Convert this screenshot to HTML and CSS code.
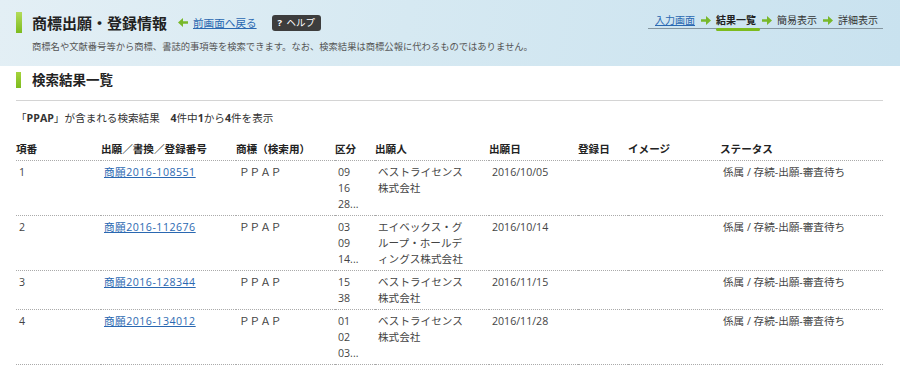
FILE: index.html
```html
<!DOCTYPE html>
<html lang="ja">
<head>
<meta charset="utf-8">
<title>商標出願・登録情報</title>
<link rel="stylesheet" href="styles.css">
</head>
<body>
  <header class="page-head">
    <div class="head-top">
      <div class="head-left">
        <h1 class="title">商標出願・登録情報</h1>
        <a class="back" href="#">
          <svg class="arrow" viewBox="0 0 10 9" width="10" height="9"><path d="M10 3.2H5V0L0 4.5 5 9V5.8h5z"/></svg>
          <span>前画面へ戻る</span>
        </a>
        <span class="help"><b>?</b> ヘルプ</span>
      </div>
      <ol class="steps">
        <li><a href="#">入力画面</a></li>
        <li class="sep"><svg class="arrow" viewBox="0 0 10 9" width="10" height="9"><path d="M0 3.2h5V0l5 4.5L5 9V5.8H0z"/></svg></li>
        <li class="active">結果一覧</li>
        <li class="sep"><svg class="arrow" viewBox="0 0 10 9" width="10" height="9"><path d="M0 3.2h5V0l5 4.5L5 9V5.8H0z"/></svg></li>
        <li>簡易表示</li>
        <li class="sep"><svg class="arrow" viewBox="0 0 10 9" width="10" height="9"><path d="M0 3.2h5V0l5 4.5L5 9V5.8H0z"/></svg></li>
        <li>詳細表示</li>
      </ol>
    </div>
    <p class="lead">商標名や文献番号等から商標、書誌的事項等を検索できます。なお、検索結果は商標公報に代わるものではありません。</p>
  </header>

  <main class="content">
    <h2 class="section-title">検索結果一覧</h2>
    <p class="count">「<b>PPAP</b>」が含まれる検索結果　<b>4</b>件中<b>1</b>から<b>4</b>件を表示</p>

    <table class="results">
      <colgroup>
        <col class="c-no">
        <col class="c-num">
        <col class="c-mark">
        <col class="c-class">
        <col class="c-applicant">
        <col class="c-date">
        <col class="c-reg">
        <col class="c-image">
        <col class="c-status">
      </colgroup>
      <thead>
        <tr>
          <th>項番</th>
          <th>出願／書換／登録番号</th>
          <th>商標（検索用）</th>
          <th>区分</th>
          <th>出願人</th>
          <th>出願日</th>
          <th>登録日</th>
          <th>イメージ</th>
          <th>ステータス</th>
        </tr>
      </thead>
      <tbody>
        <tr>
          <td>1</td>
          <td><a class="app-no" href="#">商願2016-108551</a></td>
          <td>ＰＰＡＰ</td>
          <td>09<br>16<br>28...</td>
          <td class="applicant">ベストライセンス株式会社</td>
          <td>2016/10/05</td>
          <td></td>
          <td></td>
          <td>係属 / 存続-出願-審査待ち</td>
        </tr>
        <tr>
          <td>2</td>
          <td><a class="app-no" href="#">商願2016-112676</a></td>
          <td>ＰＰＡＰ</td>
          <td>03<br>09<br>14...</td>
          <td class="applicant">エイベックス・グループ・ホールディングス株式会社</td>
          <td>2016/10/14</td>
          <td></td>
          <td></td>
          <td>係属 / 存続-出願-審査待ち</td>
        </tr>
        <tr>
          <td>3</td>
          <td><a class="app-no" href="#">商願2016-128344</a></td>
          <td>ＰＰＡＰ</td>
          <td>15<br>38</td>
          <td class="applicant">ベストライセンス株式会社</td>
          <td>2016/11/15</td>
          <td></td>
          <td></td>
          <td>係属 / 存続-出願-審査待ち</td>
        </tr>
        <tr>
          <td>4</td>
          <td><a class="app-no" href="#">商願2016-134012</a></td>
          <td>ＰＰＡＰ</td>
          <td>01<br>02<br>03...</td>
          <td class="applicant">ベストライセンス株式会社</td>
          <td>2016/11/28</td>
          <td></td>
          <td></td>
          <td>係属 / 存続-出願-審査待ち</td>
        </tr>
      </tbody>
    </table>
  </main>
</body>
</html>
```

FILE: styles.css
```css
html, body {
  margin: 0;
}

body {
  background-color: #fff;
  color: #444;
  font-family: "Open Sans", "Noto Sans CJK JP", sans-serif;
  font-size: 10.6px;
  line-height: 16px;
}

a {
  color: #2a68b1;
}

.page-head {
  height: 66px;
  box-sizing: border-box;
  padding: 12px 17px 0 16px;
  background: linear-gradient(100deg, #e3eff5 0%, #d6e9f2 45%, #c9e2ef 100%);
}

.head-top {
  display: flex;
  justify-content: space-between;
  align-items: flex-start;
}

.head-left {
  display: flex;
  align-items: center;
  height: 21px;
}

.title {
  display: flex;
  align-items: center;
  gap: 10px;
  margin: 0;
  font-size: 15px;
  font-weight: bold;
  color: #222;
}
.title::before {
  content: "";
  width: 6px;
  height: 21px;
  background: linear-gradient(#b4dc5a, #7cbb1e);
}

.arrow {
  fill: #78b82a;
  display: block;
}

.back {
  display: flex;
  align-items: center;
  gap: 5px;
  margin-left: 11px;
}

.help {
  margin-left: 15px;
  padding: 0 6px;
  height: 16px;
  line-height: 16px;
  background-color: #3d3d3d;
  color: #fff;
  border-radius: 3px;
  font-size: 9.5px;
}
.help b {
  margin-right: 2px;
}

.steps {
  display: flex;
  align-items: center;
  gap: 5.5px;
  margin: 0;
  padding: 0 5px 0 7px;
  list-style: none;
  font-size: 10px;
  color: #333;
  border-bottom: 1px solid #8596a0;
}
.steps li {
  line-height: 16px;
}
.steps .active {
  position: relative;
  font-weight: bold;
  color: #222;
}
.steps .active::after {
  content: "";
  position: absolute;
  left: 0;
  right: -4px;
  bottom: -3px;
  height: 3px;
  border-radius: 2px;
  background-color: #7cbb1e;
}

.lead {
  margin: 6px 0 0 16px;
  font-size: 9.3px;
  color: #555;
}

.content {
  padding: 0 17px 0 16px;
}

.section-title {
  display: flex;
  align-items: center;
  gap: 11px;
  margin: 6px 0 0;
  padding-bottom: 12px;
  font-size: 13.5px;
  line-height: 16px;
  font-weight: bold;
  color: #222;
  border-bottom: 1px solid #d4d4d4;
}
.section-title::before {
  content: "";
  width: 5px;
  height: 16px;
  background: linear-gradient(#a6d43c, #7cbb1e);
}

.count {
  margin: 9px 0 0;
  color: #333;
}

.results {
  width: 100%;
  margin-top: 12px;
  border-collapse: collapse;
  table-layout: fixed;
}

.c-no { width: 85px; }
.c-num { width: 135px; }
.c-mark { width: 99px; }
.c-class { width: 40px; }
.c-applicant { width: 114px; }
.c-date { width: 89px; }
.c-reg { width: 50px; }
.c-image { width: 92px; }
.c-status { width: 163px; }

.results th {
  padding: 3px 0;
  text-align: left;
  font-weight: bold;
  color: #222;
  border-bottom: 1px dotted #aaa;
}

.results td {
  padding: 3px 0 3px 3px;
  vertical-align: top;
  border-bottom: 1px dotted #aaa;
}

.results .app-no {
  letter-spacing: 0.5px;
}

.results td.applicant {
  padding-right: 22px;
  line-break: loose;
}
```
